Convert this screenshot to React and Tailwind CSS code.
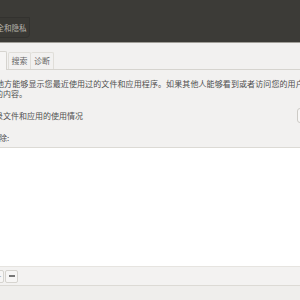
import React from "react";

const font = { fontFamily: '"Noto Sans CJK SC", "Noto Sans", sans-serif' };

const App = () => {
  return (
    <div
      className="w-[300px] h-[300px] overflow-hidden bg-[#f2f1f0] flex flex-col text-[#4f4f4f]"
      style={font}
    >
      {/* Title bar */}
      <div className="h-[43px] shrink-0 bg-[#3c3b37] border-b border-[#a09e98] pt-[17px]">
        <div className="w-[31px] h-[21px] ml-[-1px] bg-[#3a3935] border border-[#33322f] rounded-br-[4px] overflow-hidden flex items-center">
          <span className="whitespace-nowrap text-[7.5px] leading-[10px] text-[#b9b7b0] ml-[-11px]">
            安全和隐私
          </span>
        </div>
      </div>

      {/* Tabs */}
      <div className="h-[27px] shrink-0 flex items-end border-b border-[#d6d4cf]">
        <div className="h-[19px] w-[7px] bg-[#f6f5f4] border-t border-r border-[#d6d4cf] rounded-tr-[2px] self-end mb-[-1px]" />
        <div className="h-[17px] w-[23px] ml-[1px] border-t border-r border-l border-[#e0ded9] rounded-t-[2px] flex items-center justify-center text-[8px] leading-[10px] text-[#666]">
          搜索
        </div>
        <div className="h-[17px] w-[23px] border-t border-r border-[#e0ded9] rounded-t-[2px] flex items-center justify-center text-[8px] leading-[10px] text-[#666]">
          诊断
        </div>
      </div>

      {/* Content */}
      <div className="shrink-0 pt-[9px] text-[8px] leading-[10px] whitespace-nowrap overflow-hidden">
        <div className="ml-[-4px] tracking-[0.1px]">
          地方能够显示您最近使用过的文件和应用程序。如果其他人能够看到或者访问您的用户帐户，
        </div>
        <div className="ml-[-5px]">的内容。</div>
        <div className="mt-[9px] h-[15px] flex items-center justify-between">
          <span className="ml-[-5px]">录文件和应用的使用情况</span>
          <div className="w-[20px] h-[15px] mr-[-17px] rounded-[3px] border border-[#cdcbc6] bg-[#f7f6f5]" />
        </div>
        <div className="mt-[10px] ml-[-9px]">排除:</div>
      </div>

      {/* List */}
      <div className="mt-[4px] h-[119px] shrink-0 bg-white border-t border-[#dcdad5]" />

      {/* Toolbar */}
      <div className="h-[20px] shrink-0 bg-[#f3f2f1] border-t border-[#e6e4e0] border-b border-b-[#dcdad5] flex items-center gap-[1px]">
        <div className="w-[10px] h-[13px] ml-[-6px] rounded-[2px] border border-[#d6d4cf] bg-[#f7f6f5] flex items-center justify-center text-[8px] leading-none text-[#777]">
          +
        </div>
        <div className="w-[13px] h-[13px] rounded-[2px] border border-[#d6d4cf] bg-[#f7f6f5] flex items-center justify-center">
          <div className="w-[6px] h-[1.5px] bg-[#777]" />
        </div>
      </div>

      <div className="flex-1 bg-[#efeeec]" />
    </div>
  );
};

export default App;
